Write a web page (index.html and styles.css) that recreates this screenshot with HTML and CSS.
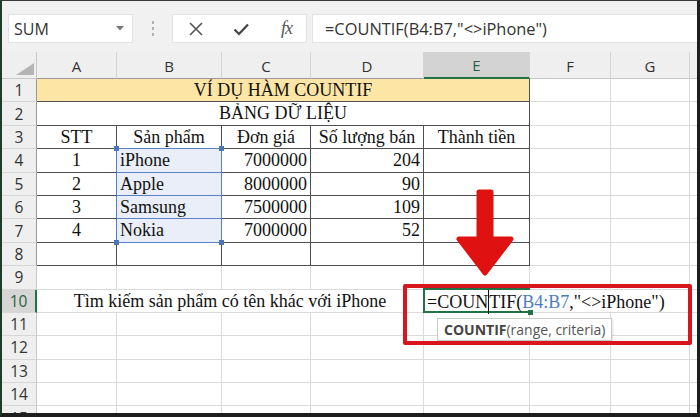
FILE: index.html
```html
<!DOCTYPE html>
<html>
<head>
<meta charset="utf-8">
<link rel="stylesheet" href="styles.css">
</head>
<body>
<div class="frame">
  <div class="fbar">
    <div class="namebox"><span>SUM</span>
      <svg class="dd" width="8" height="5" viewBox="0 0 8 5"><path d="M0 0 L8 0 L4 4.5 Z" fill="#777"/></svg>
    </div>
    <div class="grip"><i></i><i></i><i></i></div>
    <div class="fxbox">
      <svg class="ico" width="16" height="16" viewBox="0 0 16 16"><path d="M2 2 L14 14 M14 2 L2 14" stroke="#555" stroke-width="1.6" fill="none"/></svg>
      <svg class="ico" width="16" height="16" viewBox="0 0 16 16"><path d="M1.5 8.5 L6 13 L15 3.5" stroke="#444" stroke-width="2.2" fill="none"/></svg>
      <span class="fx">fx</span>
    </div>
    <div class="formula">=COUNTIF(B4:B7,"&lt;&gt;iPhone")</div>
  </div>

  <div class="sheet">
    <!-- header -->
    <div class="corner"><svg width="18" height="12" viewBox="0 0 18 12"><path d="M18 0 L18 12 L0 12 Z" fill="#b4b4b4"/></svg></div>
    <div class="ch kb">A</div><div class="ch kb">B</div><div class="ch kb">C</div><div class="ch kb">D</div><div class="ch sel">E</div><div class="ch">F</div><div class="ch">G</div><div class="ch fill"></div>

    <!-- 1 -->
    <div class="rh kr">1</div>
    <div class="c k s5 yellow center">VÍ DỤ HÀM COUNTIF</div>
    <div class="c"></div><div class="c"></div><div class="c fill"></div>
    <!-- 2 -->
    <div class="rh kr">2</div>
    <div class="c k s5 center">BẢNG DỮ LIỆU</div>
    <div class="c"></div><div class="c"></div><div class="c fill"></div>
    <!-- 3 -->
    <div class="rh kr">3</div>
    <div class="c k center">STT</div><div class="c k center bb">Sản phẩm</div><div class="c k center">Đơn giá</div><div class="c k center">Số lượng bán</div><div class="c k center">Thành tiền</div>
    <div class="c"></div><div class="c"></div><div class="c fill"></div>
    <!-- 4 -->
    <div class="rh kr">4</div>
    <div class="c k center br">1</div><div class="c k bsel br bb hd-top">iPhone</div><div class="c k right">7000000</div><div class="c k right">204</div><div class="c k"></div>
    <div class="c"></div><div class="c"></div><div class="c fill"></div>
    <!-- 5 -->
    <div class="rh kr">5</div>
    <div class="c k center br">2</div><div class="c k bsel br bb">Apple</div><div class="c k right">8000000</div><div class="c k right">90</div><div class="c k"></div>
    <div class="c"></div><div class="c"></div><div class="c fill"></div>
    <!-- 6 -->
    <div class="rh kr">6</div>
    <div class="c k center br">3</div><div class="c k bsel br bb">Samsung</div><div class="c k right">7500000</div><div class="c k right">109</div><div class="c k"></div>
    <div class="c"></div><div class="c"></div><div class="c fill"></div>
    <!-- 7 -->
    <div class="rh kr">7</div>
    <div class="c k center br">4</div><div class="c k bsel br bb hd-bot">Nokia</div><div class="c k right">7000000</div><div class="c k right">52</div><div class="c k"></div>
    <div class="c"></div><div class="c"></div><div class="c fill"></div>
    <!-- 8 -->
    <div class="rh kr">8</div>
    <div class="c k"></div><div class="c k"></div><div class="c k"></div><div class="c k"></div><div class="c k"></div>
    <div class="c"></div><div class="c"></div><div class="c fill"></div>
    <!-- 9 -->
    <div class="rh">9</div>
    <div class="c"></div><div class="c"></div><div class="c"></div><div class="c"></div><div class="c"></div><div class="c"></div><div class="c"></div><div class="c fill"></div>
    <!-- 10 -->
    <div class="rh rsel">10</div>
    <div class="c s4 center">Tìm kiếm sản phẩm có tên khác với iPhone</div>
    <div class="c s3 edit">
      <span class="active"></span>
      <span class="ftext">=COUN<span class="caret"></span>TIF(<span class="ref">B4:B7</span>,"&lt;&gt;iPhone")</span>
      <div class="tip"><b>COUNTIF</b>(range, criteria)</div>
    </div>
    <div class="c fill"></div>
    <!-- 11-15 -->
    <div class="rh">11</div>
    <div class="c"></div><div class="c"></div><div class="c"></div><div class="c"></div><div class="c"></div><div class="c"></div><div class="c"></div><div class="c fill"></div>
    <div class="rh">12</div>
    <div class="c"></div><div class="c"></div><div class="c"></div><div class="c"></div><div class="c"></div><div class="c"></div><div class="c"></div><div class="c fill"></div>
    <div class="rh">13</div>
    <div class="c"></div><div class="c"></div><div class="c"></div><div class="c"></div><div class="c"></div><div class="c"></div><div class="c"></div><div class="c fill"></div>
    <div class="rh">14</div>
    <div class="c"></div><div class="c"></div><div class="c"></div><div class="c"></div><div class="c"></div><div class="c"></div><div class="c"></div><div class="c fill"></div>
    <div class="rh">15</div>
    <div class="c"></div><div class="c"></div><div class="c"></div><div class="c"></div><div class="c"></div><div class="c"></div><div class="c"></div><div class="c fill"></div>
  </div>

  <svg class="arrow" width="66" height="94" viewBox="0 0 66 94">
    <path d="M27 6 L39 6 L39 53 L59 53 L33 87 L7 53 L27 53 Z" fill="#df1111" stroke="#df1111" stroke-width="5" stroke-linejoin="round"/>
  </svg>
  <div class="redbox"></div>
</div>
</body>
</html>
```

FILE: styles.css
```css
* { box-sizing: border-box; }
body { margin: 0; background: #fff; }

.frame {
  position: relative;
  width: 700px;
  height: 417px;
  overflow: hidden;
  background: #f1f1f1;
  border-left: 2px solid #1d3d2a;
  border-top: 1px solid #3a3a3a;
  border-right: 3px solid #1e1e1e;
  border-bottom: 4px solid #1e1e1e;
}

/* formula bar */
.fbar {
  height: 51px;
  display: flex;
  align-items: flex-start;
  padding: 13px 0 0 6px;
  font-family: "Open Sans", "Noto Sans", sans-serif;
  color: #333;
}
.namebox {
  width: 125px;
  height: 29px;
  background: #fff;
  border: 1px solid #e2e2e2;
  display: flex;
  align-items: center;
  justify-content: space-between;
  padding: 0 8px 0 5px;
  font-size: 16px;
}
.grip {
  width: 39px;
  height: 29px;
  display: flex;
  flex-direction: column;
  align-items: center;
  justify-content: center;
  gap: 3px;
}
.grip i { display: block; width: 2px; height: 3px; background: #b0b0b0; }
.fxbox {
  width: 135px;
  height: 29px;
  background: #fff;
  border: 1px solid #e2e2e2;
  display: flex;
  align-items: center;
  padding-left: 15px;
  gap: 29px;
}
.fx {
  font-family: "Liberation Serif", serif;
  font-style: italic;
  font-size: 18px;
  color: #555;
  margin-left: 3px;
  letter-spacing: -1px;
}
.formula {
  flex: 1;
  margin-left: 5px;
  height: 29px;
  background: #fff;
  border: 1px solid #e2e2e2;
  border-right: none;
  padding-left: 12px;
  font-size: 16.4px;
  line-height: 27px;
  white-space: nowrap;
}

/* sheet */
.sheet {
  display: grid;
  grid-template-columns: 35px 80px 105px 89px 113px 106px 81px 79px 1fr;
  grid-template-rows: 27px repeat(15, 23.4px);
  background: #fff;
  height: 361px;
}
.corner {
  background: #efefef;
  border-right: 1px solid #c8c8c8;
  border-bottom: 1px solid #c8c8c8;
  display: flex;
  align-items: flex-end;
  justify-content: flex-end;
  padding: 0 2px 3px 0;
}
.ch {
  background: #efefef;
  border-right: 1px solid #d4d4d4;
  border-bottom: 1px solid #c8c8c8;
  font-family: "Open Sans", "Noto Sans", sans-serif;
  font-size: 15px;
  color: #333;
  display: flex;
  align-items: center;
  justify-content: center;
  padding-top: 1px;
}
.ch.kb { border-bottom-color: #9a9a9a; }
.ch.sel {
  background: #d3d3d3;
  border-bottom: 2px solid #217346;
  color: #2b5e3e;
}
.ch.fill { border-right: none; }
.rh {
  background: #efefef;
  border-right: 1px solid #c8c8c8;
  border-bottom: 1px solid #d6d6d6;
  font-family: "Open Sans", "Noto Sans", sans-serif;
  font-size: 15.5px;
  color: #333;
  display: flex;
  align-items: center;
  justify-content: center;
}
.rh.kr { border-right-color: #9a9a9a; }
.rh.rsel {
  background: #d6d6d6;
  border-right: 2px solid #217346;
  color: #2b5e3e;
}

.c {
  position: relative;
  border-right: 1px solid #dadada;
  border-bottom: 1px solid #dadada;
  font-family: "Liberation Serif", "Times New Roman", serif;
  font-size: 18px;
  color: #111;
  line-height: 22px;
  padding: 0 3px;
  white-space: nowrap;
}
.c.fill { border-right: none; }
.c.k { border-right-color: #505050; border-bottom-color: #505050; }
.c.s5 { grid-column: span 5; }
.c.s4 { grid-column: span 4; }
.c.s3 { grid-column: span 3; border-right-color: #dadada; }
.yellow { background: #fde5a5; }
.center { text-align: center; }
.right { text-align: right; }

/* selection B4:B7 */
.c.bsel { background: #e9eef8; }
.c.br { border-right-color: #5b80c4; }
.c.bb { border-bottom-color: #5b80c4; }
.hd-top::before, .hd-top::after, .hd-bot::before, .hd-bot::after {
  content: "";
  position: absolute;
  width: 5px;
  height: 5px;
  background: #4d73b8;
  z-index: 3;
}
.hd-top::before { left: -3px; top: -3px; }
.hd-top::after { right: -3px; top: -3px; }
.hd-bot::before { left: -3px; bottom: -3px; }
.hd-bot::after { right: -3px; bottom: -3px; }

/* editing cell E10 */
.edit { overflow: visible; padding-left: 3px; z-index: 2; }
.active {
  position: absolute;
  left: -1px;
  top: -2px;
  width: 107px;
  height: calc(100% + 3px);
  border: 2px solid #217346;
  border-right: none;
}
.active::after {
  content: "";
  position: absolute;
  right: -3px;
  bottom: -4px;
  width: 5px;
  height: 5px;
  background: #217346;
}
.ftext { position: relative; }
.caret {
  display: inline-block;
  width: 0;
  height: 24px;
  border-left: 1px solid #111;
  vertical-align: -6px;
}
.ref { color: #4c7dc0; }
.tip {
  position: absolute;
  left: 13px;
  top: 28px;
  height: 23px;
  padding: 0 6px;
  background: #fff;
  border: 1px solid #c9c9c9;
  font-family: "Open Sans", "Noto Sans", sans-serif;
  font-size: 14px;
  line-height: 21px;
  color: #555;
  white-space: nowrap;
  box-shadow: 1px 1px 2px rgba(0,0,0,0.12);
}
.tip b { color: #444; font-weight: 700; }

.arrow {
  position: absolute;
  left: 450px;
  top: 185px;
  z-index: 5;
}
.redbox {
  position: absolute;
  left: 401px;
  top: 283px;
  width: 289px;
  height: 61px;
  border: 4px solid #d8151c;
  border-radius: 2px;
  z-index: 5;
}
```
